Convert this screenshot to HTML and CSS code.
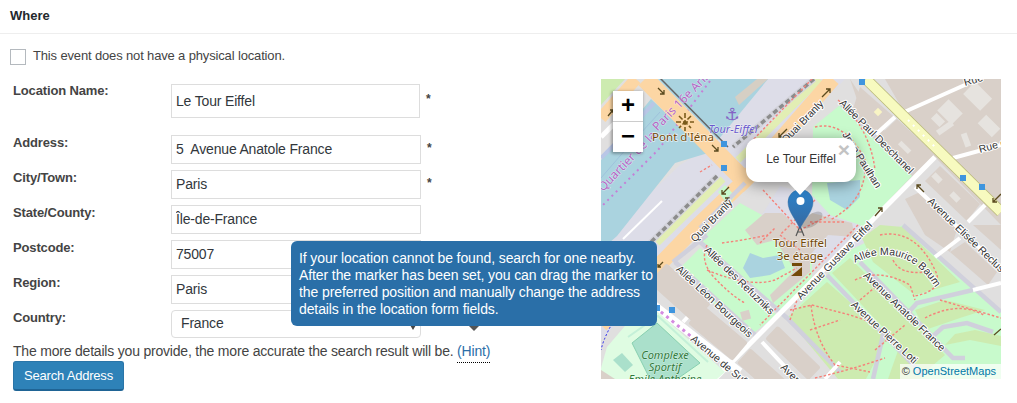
FILE: index.html
```html
<!DOCTYPE html>
<html lang="en">
<head>
<meta charset="utf-8">
<title>Where</title>
<link rel="stylesheet" href="styles.css">
</head>
<body>
<header class="box-head"><h2 class="box-title">Where</h2></header>
<label class="no-location"><input type="checkbox" class="check"><span>This event does not have a physical location.</span></label>
<div class="columns">
  <form class="fields">
    <div class="row row-first"><label class="field-label">Location Name:</label><input class="text tall" value="Le Tour Eiffel"><span class="req req-first">*</span></div>
    <div class="row"><label class="field-label">Address:</label><input class="text" value="5  Avenue Anatole France"><span class="req">*</span></div>
    <div class="row"><label class="field-label">City/Town:</label><input class="text" value="Paris"><span class="req">*</span></div>
    <div class="row"><label class="field-label">State/County:</label><input class="text" value="Île-de-France"></div>
    <div class="row"><label class="field-label">Postcode:</label><input class="text" value="75007"></div>
    <div class="row"><label class="field-label">Region:</label><input class="text" value="Paris"></div>
    <div class="row"><label class="field-label">Country:</label><div class="select-wrap"><select class="select"><option>France</option></select><span class="select-arrow"></span></div></div>
    <p class="more">The more details you provide, the more accurate the search result will be. <a class="hint">(Hint)</a></p>
    <button type="button" class="search">Search Address</button>
    <div class="tooltip">If your location cannot be found, search for one nearby.<br>After the marker has been set, you can drag the marker to<br>the preferred position and manually change the address<br>details in the location form fields.<span class="tail"></span></div>
  </form>
  <div class="map">
    <svg class="map-svg" viewBox="601 79 400 300" width="400" height="300" xmlns="http://www.w3.org/2000/svg">
      <defs>
        <linearGradient id="pin" x1="0" y1="0" x2="0" y2="1"><stop offset="0" stop-color="#2b82cb"/><stop offset="1" stop-color="#38699f"/></linearGradient>
        <path id="baumont" d="M855 263 Q 870 255 885 255 Q 915 255 935 287"/>
      </defs>
      <rect class="f-base" x="601" y="79" width="400" height="300"/>

      <!-- quay and water -->
      <polygon class="f-lav" points="740,79 845,79 750,180 690,240 640,300 601,340 601,240 680,165 705,150"/>
      <polygon class="f-water" points="658,79 768,79 718,140"/>
      <polygon class="f-water" points="651,99 708,153 675,163 617,236 601,250 601,160"/>
      <polygon class="f-dock" points="735,97 757,79 768,79 739,105"/>
      <path class="s-bank" d="M654 103 L613 146 L601 158"/>
      <path class="s-bank2" d="M660 112 L620 156 L601 178"/>
      <path class="s-white" d="M662 201 L623 239"/>
      <path class="s-pdots" d="M710 81 L658 150 L600 208"/>
      <!-- top-left corner -->
      <polygon class="f-lgreen" points="601,79 625,79 601,105"/>
      <path class="s-orange-sm" d="M636 79 L601 118"/>
      <path class="s-whitew" d="M626 112 L601 137"/>
      <!-- bridge -->
      <path class="s-bridge-edge" d="M659 79 L727 148"/>
      <path class="s-bridge" d="M645 79 L733 169 L750 186"/>
      <!-- rail and quai -->
      <path class="s-strip" d="M820 79 L738 160 M723 179 L657 243"/>
      <path class="s-railbed" d="M814 79 L733 147 M717 176 L650 243"/>
      <path class="s-rail" d="M814 79 L733 147 M717 176 L650 243"/>
      <path class="s-orange" d="M833 79 L745 180 L697 226 L601 325"/>
      <path class="s-foot" d="M700 172 L712 165 M812 79 L748 145"/>

      <!-- north east blocks -->
      <polygon class="f-block" points="850,79 866,79 1001,212 1001,379 900,225"/>
      <polygon class="f-block" points="885,79 1001,79 1001,212 900,105"/>
      <polygon class="f-base" points="850,79 866,79 935,154 915,176"/>
      <polygon class="f-block" points="860,87 893,116 875,134 852,112"/>
      <polygon class="f-block" points="897,119 935,154 913,176 878,137"/>
      <polygon class="f-base" points="935,157 1001,225 1001,379 880,379 840,300 880,215"/>
      <polygon class="f-block" points="940,166 980,204 967,221 925,181"/>
      <polygon class="f-block" points="905,199 920,192 957,229 950,252 925,235"/>
      <polygon class="f-block" points="965,242 997,272 988,285 950,252"/>
      <polygon class="f-block" points="973,225 1001,225 1001,250"/>
      <g class="f-block2">
        <rect x="-10" y="-8" width="20" height="16" transform="translate(950 112) rotate(45)"/>
        <rect x="-12" y="-8" width="24" height="17" transform="translate(978 96) rotate(45)"/>
        <rect x="-9" y="-3" width="18" height="6" transform="translate(945 128) rotate(-35)"/>
        <rect x="-6" y="-4" width="12" height="8" transform="translate(938 120) rotate(45)"/>
        <rect x="-7" y="-3" width="14" height="6" transform="translate(966 140) rotate(70)"/>
        <rect x="-10" y="-6" width="20" height="12" transform="translate(989 126) rotate(45)"/>
        <rect x="-7" y="-2" width="14" height="5" transform="translate(905 147) rotate(45)"/>
        <rect x="-5" y="-3" width="10" height="6" transform="translate(937 178) rotate(45)"/>
        <rect x="-5" y="-3" width="10" height="6" transform="translate(955 197) rotate(45)"/>
      </g>
      <rect class="f-cream" x="875" y="109" width="6" height="6" transform="rotate(45 878 112)"/>
      <path class="s-white-wide" d="M967 84 L902 113"/>
      <path class="s-white-wide" d="M1001 145 L953 158"/>
      <path class="s-white-wide" d="M895 117 L875 135"/>
      <path class="s-white-wide" d="M985 205 L968 222"/>
      <!-- yellow avenue -->
      <path class="s-yellow-case" d="M866 79 L1001 212"/>
      <path class="s-yellow" d="M866 79 L1001 212"/>
      <path class="s-dash-w" d="M908 120 L935 147"/>

      <!-- parks -->
      <polygon class="f-park" points="813,127 840,105 912,176 862,228 835,222 812,200"/>
      <polygon class="f-lav" points="780,186 812,195 830,215 860,225 868,238 835,268 810,258 762,215"/>
      <polygon class="f-water" points="827,183 860,180 860,197 847,210 830,200"/>
      <polygon class="f-park" points="740,203 762,215 790,250 812,262 812,280 778,312 700,240"/>
      <polygon class="f-park" points="680,268 700,248 777,315 747,338"/>
      <polygon class="f-park" points="718,192 725,185 735,196 728,205"/>
      <polygon class="f-water" points="743,268 750,253 763,258 780,255 785,268 770,275 750,278"/>
      <polygon class="f-park" points="850,250 903,225 1001,312 1001,379 840,379 787,318"/>
      <polygon class="f-lawn" points="862,238 880,225 903,227 960,282 925,292 915,295 873,262"/>
      <polygon class="f-lawn" points="832,273 850,258 945,355 925,372"/>
      <polygon class="f-lawn" points="787,318 827,282 888,336 866,379 838,379"/>
      <polygon class="f-lawn" points="888,379 900,345 928,372 920,379"/>
      <polygon class="f-lawn" points="945,345 955,334 975,330 1001,336 1001,346 970,340"/>
      <polygon class="f-lawn" points="915,310 945,300 985,310 960,318 925,330"/>
      <!-- tower -->
      <polygon class="f-block" points="745,230 765,213 782,213 798,227 812,213 852,223 855,237 828,235 810,255 810,272 773,303 770,295 795,270 775,240 757,245"/>
      <rect class="f-block" x="741" y="311" width="9" height="9" transform="rotate(-15 745 315)"/>
      <!-- roads -->
      <g class="s-road">
        <path d="M840 103 L913 173"/>
        <path d="M700 242 L787 318 L840 372"/>
        <path d="M827 275 L923 375"/>
        <path d="M860 262 L953 358 L965 358"/>
        <path d="M908 313 L917 303 L973 290"/>
        <path d="M932 337 L943 327 L967 323 L993 332"/>
        <path d="M903 225 L1001 312"/>
        <path d="M883 335 L873 379"/>
        <path d="M673 262 L707 235"/>
        <path d="M675 262 L755 335"/>
        <path d="M745 183 L700 228"/>
      </g>
      <path class="s-whitew" d="M935 157 L715 379"/>
      <path class="s-white-wide" d="M915 187 L1001 268"/>
      <path class="s-white-wide" d="M935 257 L960 238"/>
      <path class="s-white-wide" d="M973 290 L1001 283"/>
      <path class="s-white-wide" d="M683 322 L705 298"/>
      <path class="s-white-wide" d="M825 379 L840 362"/>
      <path class="s-white-wide" d="M762 342 L790 372"/>
      <!-- Suffren -->
      <path class="s-suffren" d="M650 302 L740 372"/>
      <path class="s-dots" d="M650 303 L693 338"/>
      <g class="s-foot">
        <path d="M815 127 Q 845 120 865 160 Q 868 200 830 220"/>
        <path d="M763 190 L800 230 L830 215"/>
        <path d="M815 200 L780 235 L800 250"/>
        <path d="M760 243 L775 228 M810 222 H845"/>
        <path d="M707 245 Q 700 260 712 275 Q 730 295 745 303"/>
        <path d="M722 243 Q 745 240 768 235"/>
        <path d="M707 270 Q 750 288 775 280 L797 268"/>
        <path d="M790 310 L812 305 L850 315 L880 325"/>
        <path d="M811 305 Q 815 340 835 365 L870 372"/>
        <path d="M815 378 Q 850 370 885 358"/>
        <path d="M880 235 Q 915 228 935 270 Q 945 290 915 296"/>
        <path d="M893 260 Q 900 275 925 272"/>
        <path d="M855 280 Q 880 268 910 285 L915 300"/>
        <path d="M940 300 L1001 318"/>
        <path d="M925 318 Q 960 300 985 316"/>
        <path d="M858 225 L760 325"/>
        <path d="M838 100 Q 870 128 875 170"/>
        <path d="M790 320 L797 300 M810 330 L840 320"/>
        <path d="M875 350 L905 325"/>
        <path d="M860 300 L880 283"/>
      </g>
      <path class="s-tower" d="M800 226 L796 236 M800 226 L804 236 M797 232 H803"/>
      <g class="f-tower-ic">
        <polygon points="792,263 802,263 802,266 792,266"/>
        <polygon points="791,276 802,267 802,276"/>
      </g>
      <!-- SW blocks -->
      <g class="f-block">
        <rect x="-30" y="-13" width="60" height="26" rx="2" transform="translate(680 293) rotate(42)"/>
        <rect x="-29" y="-12" width="58" height="24" rx="2" transform="translate(718 333) rotate(40)"/>
        <rect x="-30" y="-9" width="60" height="18" rx="2" transform="translate(793 353) rotate(44)"/>
        <rect x="-26" y="-10" width="52" height="20" rx="2" transform="translate(763 373) rotate(42)"/>
      </g>
      <!-- sport complex -->
      <polygon class="f-leisure" points="601,368 607,347 630,320 650,305 725,372 717,379 601,379"/>
      <polygon class="f-pitch" points="632,343 657,323 700,363 677,379 650,379"/>
      <polygon class="f-pitch2" points="613,360 622,353 633,365 625,372"/>
      <path class="s-border" d="M628 337 L658 316 L708 362"/>
      <path class="s-blue" d="M625 303 Q 605 332 601 350"/>
      <polygon class="f-grey" points="601,370 615,379 601,379"/>

      <!-- arrows -->
      <g class="f-arrow">
        <path d="M658 88 l6 6 m0 -4 v4 h-4"/>
        <path d="M712 145 l6 6 m0 -4 v4 h-4"/>
        <path d="M729 187 l-7 7 m4 0 h-4 v-4"/>
        <path d="M822 97 l8 -8 m-4 0 h4 v4"/>
        <path d="M787 129 l-8 8 m4 0 h-4 v-4"/>
        <path d="M722 205 l7 -7 m-4 0 h4 v4"/>
        <path d="M608 116 l5 -6 m-3 0 h3 v3"/>
        <path d="M663 262 l-5 5 m3 0 h-3 v-3"/>
        <path d="M924 192 l-7 -7 m0 4 v-4 h4"/>
        <path d="M875 216 l7 -8 m-4 0 h4 v4"/>
        <path d="M1001 194 l-8 8 m4 0 h-4 v-4"/>
        <path d="M994 335 l7 -6"/>
      </g>
      <!-- labels -->
      <text class="t-boat" x="732" y="120" text-anchor="middle">⚓</text>
      <path class="s-flower" d="M685 113 V 131 M676 122 H 694 M679 116 L691 128 M691 116 L679 128"/>
      <text class="t-purple" transform="translate(683 105) rotate(-46)" text-anchor="middle">Paris 16e Arr.</text>
      <text class="t-purple" transform="translate(630 164) rotate(-46)" text-anchor="middle">Quartier de la</text>
      <text class="t-brown" x="683" y="141" text-anchor="middle">Pont d'Iéna</text>
      <text class="t-ital" x="733" y="133" text-anchor="middle">Tour-Eiffel</text>
      <text class="t-road" transform="translate(805 124) rotate(-46)" text-anchor="middle">Quai Branly</text>
      <text class="t-road" transform="translate(714 223) rotate(-46)" text-anchor="middle">Quai Branly</text>
      <text class="t-road" transform="translate(874 139) rotate(45)" text-anchor="middle">Allée Paul Deschanel</text>
      <text class="t-road" transform="translate(980 153) rotate(-16)">Rue d</text>
      <text class="t-road" transform="translate(965 86) rotate(-16)">Rue</text>
      <text class="t-road" transform="translate(876 189) rotate(58)" text-anchor="end">Jean Paulhan</text>
      <text class="t-road" transform="translate(927 202) rotate(44)">Avenue Elisée Reclus</text>
      <text class="t-brown" x="800" y="247" text-anchor="middle">Tour Eiffel</text>
      <text class="t-brown" x="800" y="260" text-anchor="middle">3e étage</text>
      <text class="t-road" transform="translate(737 283) rotate(44)" text-anchor="middle">Allée des Refuzniks</text>
      <text class="t-road" transform="translate(712 304) rotate(43)" text-anchor="middle">Allée Léon Bourgeois</text>
      <text class="t-road" transform="translate(837 263) rotate(-46)" text-anchor="middle">Avenue Gustave Eiffel</text>
      <text class="t-road"><textPath href="#baumont">Allée Maurice Baumont</textPath></text>
      <text class="t-road" transform="translate(902 314) rotate(44)" text-anchor="middle">Avenue Anatole France</text>
      <text class="t-road" transform="translate(882 335) rotate(43)" text-anchor="middle">Avenue Pierre Loti</text>
      <text class="t-road" transform="translate(690 340) rotate(40)">Avenue de Suffren</text>
      <text class="t-road" transform="translate(780 368) rotate(45)">Avenue</text>
      <text class="t-green" x="665" y="359" text-anchor="middle">Complexe</text>
      <text class="t-green" x="665" y="371" text-anchor="middle">Sportif</text>
      <text class="t-green" x="665" y="383" text-anchor="middle">Emile Anthoine</text>
      <!-- route markers -->
      <g class="f-stop">
        <rect x="859" y="79" width="6" height="6"/>
        <rect x="721" y="141" width="6" height="6"/>
        <rect x="721" y="165" width="6" height="6"/>
        <rect x="960" y="175" width="6" height="6"/>
        <rect x="979" y="184" width="6" height="6"/>
        <rect x="669" y="307" width="6" height="6"/>
        <rect x="654" y="305" width="6" height="6"/>
      </g>
      <!-- pin -->
      <ellipse class="f-shadow" cx="812" cy="220" rx="12" ry="6" transform="rotate(-35 812 220)"/>
      <path class="f-pin" d="M800 229 C 796 219 788 212 788 202 A 12.5 12.5 0 0 1 813 202 C 813 212 804 219 800 229 Z"/>
      <circle class="f-white" cx="800.5" cy="201" r="4"/>
    </svg>
    <div class="zoom">
      <a class="zoom-btn zoom-in">+</a>
      <a class="zoom-btn">−</a>
    </div>
    <div class="popup">Le Tour Eiffel<span class="popup-x">×</span><span class="popup-tip"></span></div>
    <div class="attrib">© <a class="attrib-link">OpenStreetMaps</a></div>
  </div>
</div>
</body>
</html>
```
FILE: styles.css
```css
* { box-sizing: border-box; }
html, body { margin: 0; padding: 0; }
body {
  width: 1017px;
  height: 403px;
  overflow: hidden;
  background: #fff;
  color: #444;
  font-family: "Liberation Sans", Arial, sans-serif;
  font-size: 13px;
}
.box-head { height: 34px; border-bottom: 1px solid #eee; padding: 0 10px; }
.box-title { margin: 0; font-size: 13px; line-height: 31px; font-weight: 700; color: #23282d; }
.no-location { display: flex; align-items: flex-start; gap: 7px; margin: 15px 0 0 10px; height: 16px; line-height: 14px; letter-spacing: -0.15px; }
.check {
  appearance: none;
  width: 16px; height: 16px;
  margin: 0;
  background: #fff;
  border: 1px solid #b4b9be;
}
.columns { display: flex; margin-top: 14px; }
.fields { position: relative; width: 601px; flex: none; padding: 5px 0 0 13px; }
.row { display: flex; height: 29px; margin-bottom: 6px; }
.row-first { height: 34px; margin-bottom: 17px; }
.field-label { width: 158px; flex: none; padding-top: 1px; font-weight: 700; font-size: 13px; line-height: 14px; letter-spacing: -0.15px; color: #444; }
.row-first .field-label { padding-top: 0; }
.text {
  width: 250px; height: 29px;
  margin: 0;
  padding: 0 4px 2px;
  background: #fff;
  border: 1px solid #ddd;
  color: #32373c;
  font: 14px "Liberation Sans", Arial, sans-serif;
  letter-spacing: -0.17px;
}
.tall { height: 34px; width: 249px; padding: 0 4px; }
.req { margin-left: 6px; font-size: 12px; font-weight: 700; line-height: 26px; color: #444; }
.req-first { line-height: 31px; margin-left: 6px; }
.select-wrap { position: relative; width: 250px; height: 28px; }
.select {
  appearance: none;
  width: 100%; height: 100%;
  padding: 0 9px 2px 9px;
  background: #fff;
  border: 1px solid #ddd;
  border-radius: 4px;
  color: #32373c;
  font: 14px "Liberation Sans", Arial, sans-serif;
  letter-spacing: -0.17px;
}
.select-arrow {
  position: absolute;
  right: 5px; top: 15px;
  border-left: 3px solid transparent;
  border-right: 3px solid transparent;
  border-top: 5px solid #444;
}
.more { margin: -2px 0 0; font-size: 14px; line-height: 16px; letter-spacing: -0.2px; color: #444; white-space: nowrap; }
.hint { color: #2b6ea8; border-bottom: 1px dotted #000; padding-bottom: 3px; }
.search {
  display: block;
  width: 111px; height: 30px;
  margin: 2px 0 0 0;
  padding: 0;
  background: #2e82b8;
  border: 1px solid #2a75a8;
  border-bottom: 2px solid #1f6495;
  border-radius: 3px;
  color: #fff;
  font: 13px "Liberation Sans", Arial, sans-serif;
  letter-spacing: -0.2px;
}
.tooltip {
  position: absolute;
  z-index: 5;
  left: 291px; top: 162px;
  width: 366px; height: 85px;
  padding: 9px 8px;
  background: #2a6fa8;
  border-radius: 6px;
  color: #fff;
  font-size: 14px;
  line-height: 17px;
  letter-spacing: -0.1px;
  white-space: nowrap;
}
.tail {
  position: absolute;
  left: 178px; top: 85px;
  border-left: 5px solid transparent;
  border-right: 5px solid transparent;
  border-top: 5px solid #555;
}
.map { position: relative; width: 400px; height: 300px; flex: none; overflow: hidden; }
.map-svg { display: block; }
.zoom {
  position: absolute;
  left: 12px; top: 12px;
  width: 30px;
  border-radius: 2px;
  box-shadow: -1px 1px 3px 1px rgba(0,0,0,.3);
}
.zoom-btn {
  display: block;
  height: 30px;
  background: #fff;
  color: #000;
  font: 700 24px/28px "Liberation Sans", Arial, sans-serif;
  text-align: center;
}
.zoom-in { border-bottom: 1px solid #ccc; height: 31px; }
.popup {
  position: absolute;
  left: 145px; top: 59px;
  width: 110px; height: 44px;
  background: #fff;
  border-radius: 12px;
  box-shadow: 0 3px 14px rgba(0,0,0,.4);
  color: #333;
  font-size: 12px;
  line-height: 42px;
  text-align: center;
}
.popup-x {
  position: absolute;
  right: 6px; top: 2px;
  color: #c3c3c3;
  font: 700 21px/20px "Liberation Sans", Arial, sans-serif;
}
.popup-tip {
  position: absolute;
  left: 42px; top: 44px;
  border-left: 12px solid transparent;
  border-right: 12px solid transparent;
  border-top: 13px solid #fff;
}
.attrib {
  position: absolute;
  right: 0; bottom: 0;
  height: 15px;
  padding: 0 5px 0 2px;
  background: rgba(255,255,255,.7);
  color: #333;
  font-size: 11px;
  line-height: 15px;
}
.attrib-link { color: #0078a8; }

/* map fills */
.f-base { fill: #e0dfdf; }
.f-lav { fill: #dddde8; }
.f-water { fill: #aad3df; }
.f-dock { fill: #d6cfc4; }
.f-lgreen { fill: #cdebb0; }
.f-block { fill: #d9d0c9; }
.f-block2 { fill: #e6e3df; }
.f-cream { fill: #f8f4c4; }
.f-park { fill: #c8facc; }
.f-lawn { fill: #cdebb0; }
.f-leisure { fill: #dffce2; }
.f-pitch { fill: #aae0cb; stroke: #88d0b0; }
.f-pitch2 { fill: #aae0cb; }
.f-grey { fill: #d9d0c9; }
.f-tower-ic { fill: #734a08; }
.f-stop { fill: #3f95de; }
.f-shadow { fill: rgba(0,0,0,.16); }
.f-pin { fill: url(#pin); stroke: #2f6ca3; stroke-width: .5; }
.f-white { fill: #fff; }
.f-arrow { fill: none; stroke: #5a4a1e; stroke-width: 1.3; }

/* map strokes */
.s-bank { fill: none; stroke: #b9c6e6; stroke-width: 4; }
.s-bank2 { fill: none; stroke: #9fc2dc; stroke-width: 1; }
.s-white { fill: none; stroke: #fff; stroke-width: 2; }
.s-whitew { fill: none; stroke: #fff; stroke-width: 5; }
.s-white-wide { fill: none; stroke: #fff; stroke-width: 4; }
.s-orange-sm { fill: none; stroke: #fcd6a4; stroke-width: 12; }
.s-orange { fill: none; stroke: #fcd6a4; stroke-width: 15; }
.s-bridge { fill: none; stroke: #fcd6a4; stroke-width: 18; }
.s-bridge-edge { fill: none; stroke: #666; stroke-width: 1.5; transform: translate(1px, -1px); }
.s-strip { fill: none; stroke: #e2eeb4; stroke-width: 7; }
.s-railbed { fill: none; stroke: #d4d4dc; stroke-width: 6; }
.s-rail { fill: none; stroke: #8c8c8c; stroke-width: 3.5; stroke-dasharray: 5 3; }
.s-yellow-case { fill: none; stroke: #b8b878; stroke-width: 11; }
.s-yellow { fill: none; stroke: #f7fabf; stroke-width: 9.5; }
.s-dash-w { fill: none; stroke: #fff; stroke-width: 2; stroke-dasharray: 2 5; }
.s-road { fill: none; stroke: #d0d0dc; stroke-width: 4.5; }
.s-suffren { fill: none; stroke: #fff; stroke-width: 8; }
.s-dots { fill: none; stroke: #d48be0; stroke-width: 3; stroke-dasharray: 3 4; }
.s-pdots { fill: none; stroke: #c57fd6; stroke-width: 2; stroke-dasharray: 2 4; }
.s-foot { fill: none; stroke: #f5827a; stroke-width: 1.4; stroke-dasharray: 2.5 2; }
.s-tower { fill: none; stroke: #555; stroke-width: 1.2; }
.s-border { fill: none; stroke: #c4f0d8; stroke-width: 2; }
.s-blue { fill: none; stroke: #2222ee; stroke-width: 1; stroke-dasharray: 2 2; }
.s-flower { fill: none; stroke: #7a5a1a; stroke-width: 1.6; stroke-dasharray: 5 2; }

/* map labels */
.t-road, .t-brown, .t-ital, .t-purple, .t-green {
  paint-order: stroke;
  stroke-linejoin: round;
}
.t-road { font-family: "Liberation Sans", Arial, sans-serif; font-size: 10.5px; fill: #333; stroke: #fff; stroke-width: 2px; }
.t-brown { font-family: "Noto Sans", "DejaVu Sans", sans-serif; font-size: 11.5px; fill: #734a08; stroke: rgba(255,255,255,.7); stroke-width: 1.5px; }
.t-ital { font-family: "Noto Sans", "DejaVu Sans", sans-serif; font-size: 11px; font-style: italic; fill: #6a5acd; stroke: rgba(255,255,255,.6); stroke-width: 1px; }
.t-purple { font-family: "Noto Sans", "DejaVu Sans", sans-serif; font-size: 12px; fill: #b565c4; stroke: rgba(255,255,255,.5); stroke-width: 1px; }
.t-green { font-family: "Noto Sans", "DejaVu Sans", sans-serif; font-size: 11px; font-style: italic; fill: #2f7a3a; stroke: rgba(255,255,255,.5); stroke-width: 1px; }
.t-boat { font-family: "DejaVu Sans", sans-serif; font-size: 17px; fill: #8461c4; }
```
